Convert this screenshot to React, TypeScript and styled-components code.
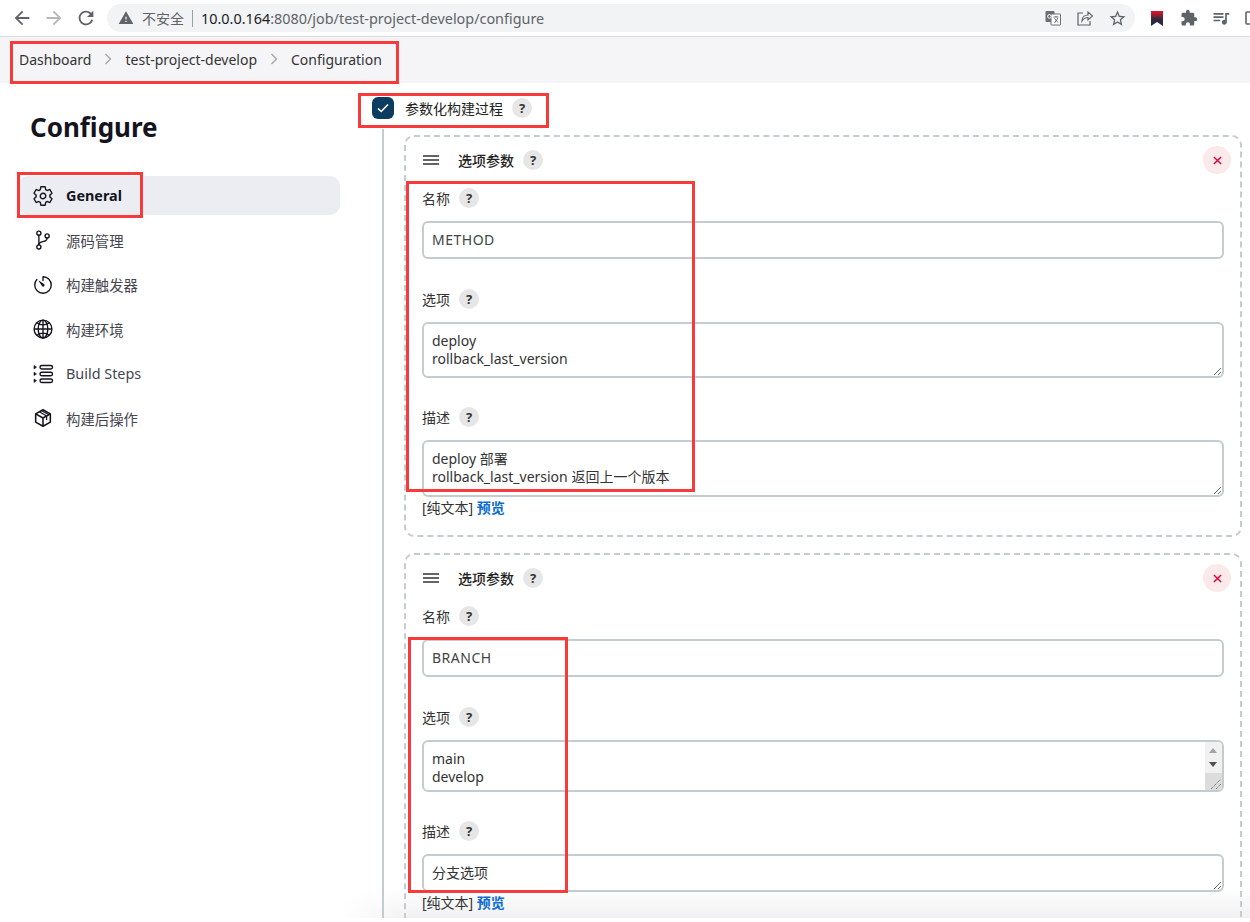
import React from 'react';
import styled, { createGlobalStyle } from 'styled-components';
import { MdArrowBack, MdArrowForward, MdRefresh, MdWarning, MdStarBorder, MdExtension, MdOutlineQueueMusic } from 'react-icons/md';
import { IoSettingsOutline, IoGitBranchOutline, IoTimerOutline, IoGlobeOutline } from 'react-icons/io5';

const GlobalStyle = createGlobalStyle`
  html, body {
    margin: 0;
    background: #fff;
    font-family: "Noto Sans", "Noto Sans CJK SC", sans-serif;
  }
`;

const Page = styled.div`
  position: relative;
  isolation: isolate;
  width: 1250px;
  height: 922px;
  overflow: hidden;
  color: #333;
`;

// Browser toolbar
const Toolbar = styled.div`
  height: 36px;
  display: flex;
  align-items: center;
  border-bottom: 1px solid #dadce0;
  background: #fff;
`;

const NavIcons = styled.div`
  width: 107px;
  padding-left: 11px;
  box-sizing: border-box;
  display: flex;
  gap: 10px;
  flex-shrink: 0;
`;

const NavButton = styled.span<{ $off?: boolean }>`
  display: flex;
  color: ${(p) => (p.$off ? '#b4b6b9' : '#5f6368')};
  font-size: 22px;
`;

const AddressBar = styled.div`
  width: 1028px;
  height: 28px;
  flex-shrink: 0;
  border-radius: 14px;
  background: #f1f3f4;
  display: flex;
  align-items: center;
  padding-left: 11px;
  box-sizing: border-box;
`;

const Insecure = styled.span`
  display: flex;
  align-items: center;
  gap: 8px;
  color: #5f6368;
  font-size: 14px;
  padding-right: 8px;
  border-right: 1px solid #9aa0a6;
  height: 17px;
  line-height: 17px;
`;

const Url = styled.span`
  margin-left: 8px;
  font-size: 14.4px;
  color: #5f6368;
  flex: 1;

  b {
    font-weight: 400;
    color: #202124;
  }
`;

const AddressIcons = styled.div`
  display: flex;
  align-items: center;
  padding-right: 2px;
`;

const ExtIcons = styled.div`
  display: flex;
  align-items: center;
  margin-left: 6px;
  flex-shrink: 0;
`;

const IconSlot = styled.span`
  width: 32px;
  display: flex;
  justify-content: center;
  color: #5f6368;
`;

// Breadcrumbs
const Breadcrumbs = styled.nav`
  height: 46px;
  box-sizing: border-box;
  background: #f5f5f8;
  display: flex;
  align-items: center;
  padding: 0 0 2px 19px;
  font-size: 14px;
  color: #333;
`;

const Chevron = styled.svg`
  width: 8px;
  height: 12px;
  margin: 0 13px;
  fill: none;
  stroke: #a3a3a8;
  stroke-width: 1.3;
`;

const Body = styled.div`
  position: relative;
  z-index: 1;
  display: flex;
  align-items: flex-start;
`;

// Side panel
const Sidebar = styled.aside`
  width: 340px;
  flex-shrink: 0;
  padding: 24px 0 0 18px;
  box-sizing: border-box;
`;

const Title = styled.h1`
  margin: 0 0 29px 12px;
  font-size: 26px;
  line-height: 40px;
  font-weight: 700;
  color: #14141f;
`;

const NavList = styled.div`
  display: flex;
  flex-direction: column;
`;

const NavItem = styled.div<{ $active?: boolean }>`
  height: 39px;
  margin-bottom: 5.5px;
  display: flex;
  align-items: center;
  gap: 12px;
  padding-left: 14px;
  border-radius: 10px;
  font-size: 14.4px;
  font-weight: ${(p) => (p.$active ? 700 : 400)};
  color: ${(p) => (p.$active ? '#14141f' : '#45454f')};
  background: ${(p) => (p.$active ? '#ecedf3' : 'transparent')};

  svg {
    width: 22px;
    height: 22px;
    color: #14141f;
    flex-shrink: 0;
  }
`;

// Main form
const Main = styled.main`
  flex: 1;
  padding: 14px 8px 0 32px;
  min-width: 0;
`;

const CheckRow = styled.div`
  display: flex;
  align-items: center;
  height: 22px;
  font-size: 14px;
  color: #222;
`;

const Checkbox = styled.span`
  width: 22px;
  height: 22px;
  border-radius: 6px;
  background: #0d3c61;
  display: flex;
  align-items: center;
  justify-content: center;
  margin-right: 11px;
`;

const Help = styled.span`
  width: 20px;
  height: 20px;
  border-radius: 50%;
  background: #e6e6e6;
  color: #333;
  font-size: 13px;
  font-weight: 700;
  line-height: 20px;
  text-align: center;
  margin-left: 9px;
  flex-shrink: 0;
`;

const Section = styled.section`
  margin: 10px 0 0 10px;
  padding: 6px 0 0 20px;
  border-left: 2px solid #c3ccd1;
`;

const Card = styled.div`
  position: relative;
  border: 2px dashed #c3ccd1;
  border-radius: 10px;
  padding: 0 16px 17px;
  margin-bottom: 16px;
`;

const CardHeader = styled.div`
  height: 46px;
  margin-bottom: 5px;
  display: flex;
  align-items: center;
  font-size: 14px;
  font-weight: 500;
  color: #222;
`;

const Handle = styled.svg`
  width: 16px;
  height: 10px;
  margin: 0 19px 0 1px;
  stroke: #333;
  stroke-width: 1.6;
`;

const RemoveButton = styled.span`
  position: absolute;
  top: 9px;
  right: 9px;
  width: 28px;
  height: 28px;
  border-radius: 50%;
  background: #fbe9ec;
  display: flex;
  align-items: center;
  justify-content: center;
`;

const Field = styled.div<{ $gap: number }>`
  margin-bottom: ${(p) => p.$gap}px;
`;

const Label = styled.div`
  display: flex;
  align-items: center;
  height: 20px;
  margin-bottom: 13px;
  font-size: 14px;
  color: #333;
`;

const TextInput = styled.input`
  display: block;
  width: 100%;
  height: 38px;
  box-sizing: border-box;
  border: 2px solid #c3ccd1;
  border-radius: 6px;
  padding: 0 8px 2px;
  font: 14px "Noto Sans", "Noto Sans CJK SC", sans-serif;
  letter-spacing: 0.5px;
  color: #444;
  background: #fff;
  outline: none;
`;

const TextArea = styled.textarea<{ $height: number }>`
  display: block;
  width: 100%;
  height: ${(p) => p.$height}px;
  box-sizing: border-box;
  border: 2px solid #c3ccd1;
  border-radius: 6px;
  padding: 8px;
  font: 14px/18px "Noto Sans", "Noto Sans CJK SC", sans-serif;
  color: #333;
  background: #fff;
  outline: none;
  resize: vertical;
  overflow: hidden;
`;

const AreaWrap = styled.div`
  position: relative;
`;

// textarea scrollbar, sits on top of the field
const FakeScroll = styled.div`
  position: absolute;
  top: 2px;
  right: 2px;
  bottom: 2px;
  width: 17px;
  background: linear-gradient(#f1f1f1 0 31px, #dcdcdc 31px);
  border-radius: 0 4px 4px 0;
  pointer-events: none;
`;

const ArrowUp = styled.i`
  position: absolute;
  left: 4px;
  top: 6px;
  border: 4px solid transparent;
  border-top: 0;
  border-bottom: 5px solid #a3a3a3;
`;

const ArrowDown = styled.i`
  position: absolute;
  left: 4px;
  top: 20px;
  border: 4px solid transparent;
  border-bottom: 0;
  border-top: 5px solid #505050;
`;

const Grip = styled.svg`
  position: absolute;
  right: 0;
  bottom: 0;
  width: 12px;
  height: 12px;
  stroke: #555;
  stroke-width: 1;
  stroke-dasharray: 1 1;
`;

const CardFooter = styled.div`
  height: 20px;
  line-height: 20px;
  margin-top: 1px;
  font-size: 14px;
  color: #333;

  a {
    color: #0b6bd0;
    font-weight: 700;
    text-decoration: none;
  }
`;

// annotations drawn on the screenshot
const Mark = styled.div<{ $x: number; $y: number; $w: number; $h: number }>`
  position: absolute;
  z-index: 2;
  left: ${(p) => p.$x}px;
  top: ${(p) => p.$y}px;
  width: ${(p) => p.$w}px;
  height: ${(p) => p.$h}px;
  box-sizing: border-box;
  border: 3px solid #f93a3a;
  pointer-events: none;
`;

// sticky save bar fade, behind the form
const BottomFade = styled.div`
  position: absolute;
  z-index: 0;
  left: 340px;
  right: 0;
  top: 888px;
  height: 30px;
  background: linear-gradient(rgba(240, 240, 242, 0), rgba(240, 240, 242, 0.95));
  mask-image: linear-gradient(to right, transparent, #000 70px);
  pointer-events: none;
`;

const BottomEdge = styled.div`
  position: absolute;
  z-index: 2;
  left: 0;
  right: 0;
  top: 918px;
  height: 4px;
  background: #fff;
`;

const ChevronIcon = () => (
  <Chevron viewBox="0 0 8 12">
    <path d="M1.5 1l5 5-5 5" />
  </Chevron>
);

const HandleIcon = () => (
  <Handle viewBox="0 0 16 10">
    <path d="M0 1h16M0 5h16M0 9h16" />
  </Handle>
);

const CloseIcon = () => (
  <svg width="9" height="9" viewBox="0 0 10 10" stroke="#e6003c" strokeWidth="1.6">
    <path d="M1 1l8 8M9 1l-8 8" />
  </svg>
);

const TranslateIcon = () => (
  <svg width="16" height="16" viewBox="0 0 16 16">
    <rect x="0.5" y="1" width="9" height="11" rx="1" fill="#6b6f73" />
    <rect x="6" y="4" width="9.5" height="11" rx="0.5" fill="#fff" stroke="#6b6f73" />
    <path d="M8.5 7h5M11 6v1M9.5 13l3.5-5M9.5 8.5l3.5 4" stroke="#6b6f73" fill="none" />
    <circle cx="4.4" cy="6.4" r="1.8" fill="none" stroke="#fff" />
  </svg>
);

const ShareIcon = () => (
  <svg width="16" height="16" viewBox="0 0 16 16" fill="none" stroke="#5f6368" strokeWidth="1.2">
    <path d="M6 3H1v12h12v-4" />
    <path d="M5 11c0-4 3-6 6-6V2l4.500 4L11 10V7.500C8.500 7.500 6.500 8.500 5 11z" />
  </svg>
);

const BookmarkIcon = () => (
  <svg width="14" height="15" viewBox="0 0 14 15">
    <defs>
      <linearGradient id="mark" x1="0" y1="0" x2="0" y2="1">
        <stop offset="0.1" stopColor="#d3152b" />
        <stop offset="0.55" stopColor="#2c2a3c" />
      </linearGradient>
    </defs>
    <path d="M1 0h12v15l-6-4-6 4z" fill="url(#mark)" />
  </svg>
);

const PanelIcon = () => (
  <svg width="16" height="14" viewBox="0 0 16 14" fill="none" stroke="#5f6368" strokeWidth="1.6">
    <rect x="1" y="1" width="14" height="12" rx="1" />
    <path d="M6 1v12" />
  </svg>
);

const StepsIcon = () => (
  <svg viewBox="0 0 22 22" fill="none" stroke="currentColor" strokeWidth="1.4">
    <rect x="8" y="2.500" width="12.500" height="3.500" rx="1.700" />
    <rect x="8" y="9.200" width="12.500" height="3.500" rx="1.700" />
    <rect x="8" y="16" width="12.500" height="3.500" rx="1.700" />
    <path d="M2 2.500l2.500 1.700L2 6zM2 9.200l2.500 1.700L2 12.600zM2 16l2.500 1.700L2 19.400z" fill="currentColor" strokeWidth="0.6" />
  </svg>
);

const PackageIcon = () => (
  <svg viewBox="0 0 24 24" fill="none" stroke="currentColor" strokeWidth="1.7" strokeLinejoin="round">
    <path d="M12 3l8 4.500v9L12 21l-8-4.500v-9z" />
    <path d="M4 7.500l8 4.500 8-4.500M12 12v9" />
    <path d="M8 5.200l8 4.600v4.400M10.500 4l8 4.500" strokeWidth="1.300" />
  </svg>
);

const navItems = [
  { label: 'General', icon: <IoSettingsOutline />, active: true },
  { label: '源码管理', icon: <IoGitBranchOutline /> },
  { label: '构建触发器', icon: <IoTimerOutline /> },
  { label: '构建环境', icon: <IoGlobeOutline /> },
  { label: 'Build Steps', icon: <StepsIcon /> },
  { label: '构建后操作', icon: <PackageIcon /> },
];

type ParamProps = {
  name: string;
  options: string;
  optionsHeight: number;
  description: string;
  descriptionHeight: number;
  scrolled?: boolean;
};

const ParamCard: React.FC<ParamProps> = ({ name, options, optionsHeight, description, descriptionHeight, scrolled }) => (
  <Card>
    <CardHeader>
      <HandleIcon />
      选项参数
      <Help>?</Help>
    </CardHeader>
    <RemoveButton>
      <CloseIcon />
    </RemoveButton>
    <Field $gap={30}>
      <Label>
        名称
        <Help>?</Help>
      </Label>
      <TextInput value={name} readOnly />
    </Field>
    <Field $gap={29}>
      <Label>
        选项
        <Help>?</Help>
      </Label>
      <AreaWrap>
        <TextArea $height={optionsHeight} value={options} readOnly />
        {scrolled && (
          <FakeScroll>
            <ArrowUp />
            <ArrowDown />
            <Grip viewBox="0 0 12 12">
              <path d="M1 11L11 1M6 11l5-5" />
            </Grip>
          </FakeScroll>
        )}
      </AreaWrap>
    </Field>
    <Field $gap={0}>
      <Label>
        描述
        <Help>?</Help>
      </Label>
      <TextArea $height={descriptionHeight} value={description} readOnly />
    </Field>
    <CardFooter>
      [纯文本] <a href="#preview">预览</a>
    </CardFooter>
  </Card>
);

const App: React.FC = () => {
  return (
    <Page>
      <GlobalStyle />
      <BottomFade />
      <Toolbar>
        <NavIcons>
          <NavButton><MdArrowBack /></NavButton>
          <NavButton $off><MdArrowForward /></NavButton>
          <NavButton><MdRefresh /></NavButton>
        </NavIcons>
        <AddressBar>
          <Insecure>
            <MdWarning size={16} />
            不安全
          </Insecure>
          <Url><b>10.0.0.164</b>:8080/job/test-project-develop/configure</Url>
          <AddressIcons>
            <IconSlot><TranslateIcon /></IconSlot>
            <IconSlot><ShareIcon /></IconSlot>
            <IconSlot><MdStarBorder size={19} /></IconSlot>
          </AddressIcons>
        </AddressBar>
        <ExtIcons>
          <IconSlot><BookmarkIcon /></IconSlot>
          <IconSlot><MdExtension size={18} /></IconSlot>
          <IconSlot><MdOutlineQueueMusic size={20} /></IconSlot>
          <IconSlot><PanelIcon /></IconSlot>
        </ExtIcons>
      </Toolbar>

      <Breadcrumbs>
        Dashboard
        <ChevronIcon />
        test-project-develop
        <ChevronIcon />
        Configuration
      </Breadcrumbs>

      <Body>
        <Sidebar>
          <Title>Configure</Title>
          <NavList>
            {navItems.map((item) => (
              <NavItem key={item.label} $active={item.active}>
                {item.icon}
                {item.label}
              </NavItem>
            ))}
          </NavList>
        </Sidebar>

        <Main>
          <CheckRow>
            <Checkbox>
              <svg width="12" height="10" viewBox="0 0 12 10" fill="none" stroke="#fff" strokeWidth="1.6">
                <path d="M1 5.500l3.200 3L11 1.500" />
              </svg>
            </Checkbox>
            参数化构建过程
            <Help>?</Help>
          </CheckRow>
          <Section>
            <ParamCard
              name="METHOD"
              options={'deploy\nrollback_last_version'}
              optionsHeight={56}
              description={'deploy 部署\nrollback_last_version 返回上一个版本'}
              descriptionHeight={57}
            />
            <ParamCard
              name="BRANCH"
              options={'main\ndevelop'}
              optionsHeight={52}
              description="分支选项"
              descriptionHeight={38}
              scrolled
            />
          </Section>
        </Main>
      </Body>

      <BottomEdge />

      <Mark $x={10} $y={41} $w={389} $h={43} />
      <Mark $x={358} $y={93} $w={191} $h={35} />
      <Mark $x={17} $y={172} $w={126} $h={46} />
      <Mark $x={406} $y={181} $w={289} $h={311} />
      <Mark $x={408} $y={637} $w={160} $h={256} />
    </Page>
  );
};

export default App;
